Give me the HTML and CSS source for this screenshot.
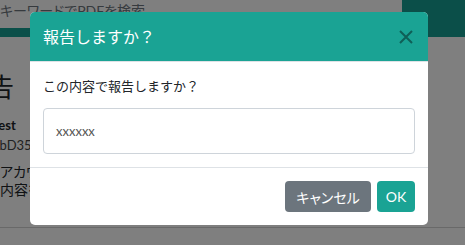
FILE: index.html
```html
<!DOCTYPE html>
<html lang="ja">
<head>
<meta charset="utf-8">
<link rel="stylesheet" href="styles.css">
</head>
<body>
<div class="page">
  <header class="navbar">
    <div class="search">キーワードでPDFを検索</div>
  </header>
  <main class="content">
    <h1 class="heading">報告</h1>
    <div class="user">Test</div>
    <div class="uid">0bD35</div>
    <p class="note">アカウ<br>内容を</p>
  </main>
  <div class="bottom-line"></div>
</div>
<div class="backdrop"></div>
<div class="modal">
  <div class="modal-header">
    <h2 class="modal-title">報告しますか？</h2>
    <button class="close" aria-label="Close">
      <svg width="14" height="14" viewBox="0 0 14 14"><path d="M1 1L13 13M13 1L1 13" stroke="currentColor" stroke-width="2" fill="none"/></svg>
    </button>
  </div>
  <div class="modal-body">
    <p class="question">この内容で報告しますか？</p>
    <div class="field">xxxxxx</div>
  </div>
  <div class="modal-footer">
    <button class="btn btn-cancel">キャンセル</button>
    <button class="btn btn-ok">OK</button>
  </div>
</div>
</body>
</html>
```

FILE: styles.css
```css
html, body {
  margin: 0;
  padding: 0;
}
body {
  width: 465px;
  height: 245px;
  overflow: hidden;
  font-family: Lato, "Noto Sans CJK JP", sans-serif;
  color: #212529;
  background: #fff;
}
.page {
  height: 245px;
  display: flex;
  flex-direction: column;
}
.navbar {
  height: 37px;
  background: #179f92;
  flex: none;
}
.search {
  width: 402px;
  height: 28px;
  background: #fff;
  box-sizing: border-box;
  padding: 2px 0 0 0;
  font-size: 14px;
  line-height: 18px;
  color: #6c757d;
  white-space: nowrap;
  overflow: hidden;
  font-feature-settings: "palt";
}
.content {
  flex: 1;
  margin-left: -24px;
  padding-top: 32px;
}
.heading {
  margin: 0 0 0 -14px;
  font-size: 26px;
  font-weight: 400;
  line-height: 34px;
  font-family: "Noto Sans CJK JP", sans-serif;
}
.user {
  margin-top: 12px;
  margin-left: 16px;
  font-weight: 700;
  font-size: 13px;
  line-height: 20px;
}
.uid {
  margin-left: 16px;
  font-size: 13px;
  line-height: 20px;
  color: #444;
}
.note {
  margin: 8px 0 0 24px;
  font-size: 14px;
  line-height: 18px;
  font-feature-settings: "palt";
}
.bottom-line {
  height: 1px;
  background: #d2d2d2;
  margin-bottom: 17px;
  flex: none;
}
.backdrop {
  position: fixed;
  inset: 0;
  background: rgba(0, 0, 0, 0.5);
}
.modal {
  position: fixed;
  left: 30px;
  top: 12px;
  width: 398px;
  background: #fff;
  border-radius: 5px;
  overflow: hidden;
}
.modal-header {
  height: 50px;
  background: #1aa394;
  display: flex;
  align-items: center;
  justify-content: space-between;
  padding: 0 15px 0 13px;
}
.modal-title {
  margin: 0;
  font-size: 16px;
  font-weight: 400;
  color: #fff;
  font-family: "Noto Sans CJK JP", sans-serif;
  line-height: 24px;
  padding-bottom: 2px;
}
.close {
  border: 0;
  background: none;
  padding: 0;
  width: 14px;
  height: 14px;
  color: #0f5f57;
  display: flex;
}
.modal-body {
  padding: 13px 13px 13px;
  border-top: 1px solid #dee2e6;
  margin-top: -1px;
}
.question {
  margin: 0 0 12px;
  font-size: 13px;
  line-height: 21px;
  font-family: "Noto Sans CJK JP", sans-serif;
}
.field {
  height: 46px;
  box-sizing: border-box;
  border: 1px solid #ced4da;
  border-radius: 4px;
  padding: 0 12px;
  display: flex;
  align-items: center;
  font-size: 13px;
  color: #555;
}
.modal-footer {
  border-top: 1px solid #dee2e6;
  padding: 13px 13px;
  display: flex;
  justify-content: flex-end;
  gap: 6px;
}
.btn {
  height: 31px;
  border: 0;
  border-radius: 4px;
  color: #fff;
  font-size: 14px;
  font-family: Lato, "Noto Sans CJK JP", sans-serif;
  font-feature-settings: "palt";
  padding: 0 11px;
}
.btn-cancel {
  background: #6c757d;
  width: 86px;
}
.btn-ok {
  background: #1aa394;
  width: 38px;
  padding: 0;
}
```
